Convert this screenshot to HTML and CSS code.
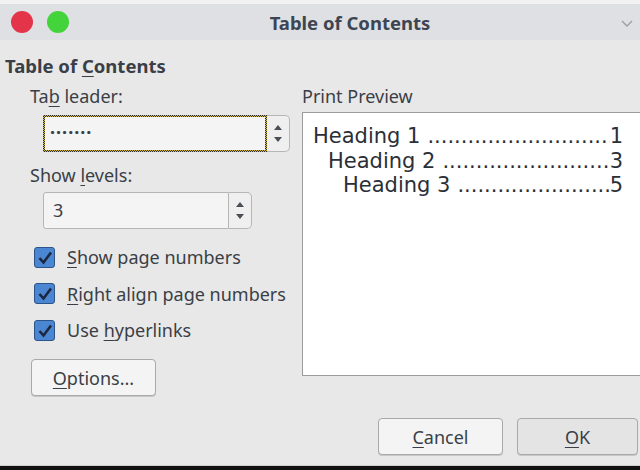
FILE: index.html
```html
<!DOCTYPE html>
<html>
<head>
<meta charset="utf-8">
<link rel="stylesheet" href="styles.css">
</head>
<body>
<div class="window">
  <div class="topstrip"></div>
  <header class="titlebar">
    <div class="lights">
      <span class="light red"></span>
      <span class="light green"></span>
    </div>
    <div class="title">Table of Contents</div>
    <svg class="chev" width="14" height="10" viewBox="0 0 14 10"><path d="M2 3 L7 8 L12 3" fill="none" stroke="#9aa0a8" stroke-width="1.4"/></svg>
  </header>

  <main class="content">
    <h1 class="heading">Table of <u>C</u>ontents</h1>
    <div class="cols">
      <section class="left">
        <div class="label first">Ta<u>b</u> leader:</div>
        <div class="spin wide">
          <div class="field focus">·······</div>
          <div class="arrows"><span class="up"></span><span class="down"></span></div>
        </div>
        <div class="label second">Show <u>l</u>evels:</div>
        <div class="spin narrow">
          <div class="field">3</div>
          <div class="arrows"><span class="up"></span><span class="down"></span></div>
        </div>
        <div class="checks">
          <label class="check"><span class="box"><svg viewBox="0 0 20 20" width="20" height="20"><path d="M4.5 10 L8.5 14.5 L16 4.5" fill="none" stroke="#1d2740" stroke-width="2.6"/></svg></span><span><u>S</u>how page numbers</span></label>
          <label class="check"><span class="box"><svg viewBox="0 0 20 20" width="20" height="20"><path d="M4.5 10 L8.5 14.5 L16 4.5" fill="none" stroke="#1d2740" stroke-width="2.6"/></svg></span><span><u>R</u>ight align page numbers</span></label>
          <label class="check"><span class="box"><svg viewBox="0 0 20 20" width="20" height="20"><path d="M4.5 10 L8.5 14.5 L16 4.5" fill="none" stroke="#1d2740" stroke-width="2.6"/></svg></span><span>Use <u>h</u>yperlinks</span></label>
        </div>
        <button class="btn options"><u>O</u>ptions...</button>
      </section>
      <section class="right">
        <div class="label first plain">Print Preview</div>
        <div class="preview">
          <div class="toc"><span class="name">Heading 1</span><span class="dots"></span><span>1</span></div>
          <div class="toc l2"><span class="name">Heading 2</span><span class="dots"></span><span>3</span></div>
          <div class="toc l3"><span class="name">Heading 3</span><span class="dots"></span><span>5</span></div>
        </div>
      </section>
    </div>
  </main>

  <footer class="footer">
    <button class="btn"><u>C</u>ancel</button>
    <button class="btn ok"><u>O</u>K</button>
  </footer>
  <div class="bottombar"></div>
</div>
</body>
</html>
```
FILE: styles.css
```css
* { box-sizing: border-box; }
html, body { margin: 0; padding: 0; }
body {
  width: 640px;
  height: 470px;
  overflow: hidden;
  background: #e8e8e8;
  font-family: "Noto Sans", "Open Sans", sans-serif;
  color: #3a3f47;
}
u { text-decoration-thickness: 1px; text-underline-offset: 3px; }

.window { display: flex; flex-direction: column; height: 470px; }

.topstrip { height: 4px; background: #f2f2f2; }

.titlebar {
  height: 36px;
  background: #dfe0e3;
  display: flex;
  align-items: center;
  position: relative;
  padding: 0 0 0 11px;
}
.lights { display: flex; gap: 14px; }
.light { width: 22px; height: 22px; border-radius: 50%; display: block; }
.red { background: #e3344a; }
.green { background: #43d33a; }
.title {
  position: absolute;
  left: 0; right: 0; top: 0; bottom: 0;
  display: flex; align-items: center; justify-content: center;
  padding-left: 60px;
  font-weight: 700;
  font-size: 18.5px;
  color: #3d4552;
}
.chev { position: absolute; right: 6px; top: 14px; }

.content { flex: 1; padding: 14px 0 0 5px; min-height: 0; }
.heading {
  margin: 0;
  font-size: 18.5px;
  font-weight: 700;
  color: #3a3f47;
  line-height: 24px;
}

.cols { display: flex; }
.left { width: 297px; flex-shrink: 0; padding-left: 25px; }
.right { flex: 1; min-width: 0; }

.label { font-size: 18px; line-height: 24px; }
.label.first { margin-top: 6px; }
.label.second { margin-top: 11px; }
.label.plain { margin-bottom: 4px; }

.spin { display: flex; margin-left: 13px; height: 37px; }
.spin.wide { width: 247px; margin-top: 7px; }
.spin.narrow { width: 209px; margin-top: 5px; }
.field {
  flex: 1;
  border: 1px solid #b6b6b6;
  border-radius: 3px 0 0 3px;
  background: #f4f4f4;
  font-size: 18px;
  line-height: 34px;
  padding-left: 9px;
}
.field.focus {
  border: 2px solid transparent;
  border-radius: 0;
  background:
    linear-gradient(#f4f4f4, #f4f4f4) padding-box,
    repeating-conic-gradient(#2a2a2a 0 25%, #d9be3c 0 50%) 0 0 / 2px 2px border-box;
  line-height: 31px;
  padding-left: 5px;
  letter-spacing: 1px;
  font-weight: 700;
}
.arrows {
  width: 23px;
  border: 1px solid #b6b6b6;
  border-left: none;
  border-radius: 0 5px 5px 0;
  background: #efefef;
  display: flex;
  flex-direction: column;
  align-items: center;
  justify-content: center;
  gap: 7px;
}
.up, .down { width: 0; height: 0; border-left: 4px solid transparent; border-right: 4px solid transparent; }
.up { border-bottom: 5px solid #4a4f57; }
.down { border-top: 5px solid #4a4f57; }

.checks { margin: 16px 0 0 4px; display: flex; flex-direction: column; gap: 12.5px; }
.check { display: flex; align-items: center; gap: 12px; font-size: 18px; line-height: 24px; }
.box {
  width: 21px; height: 21px;
  border: 1px solid #2d5488;
  border-radius: 3px;
  background: #4a86d2;
  display: block;
}
.box svg { display: block; }

.btn {
  font-family: "Noto Sans", "Open Sans", sans-serif;
  font-size: 18px;
  color: #3a3f47;
  background: #f4f4f4;
  border: 1px solid #a9a9a9;
  border-radius: 4px;
  height: 37px;
  width: 125px;
  padding: 0;
  box-shadow: 0 1px 0 #c8c8c8;
}
.options { margin: 17px 0 0 1px; display: block; }

.preview {
  height: 264px;
  background: #ffffff;
  border: 1px solid #9c9c9c;
  border-right: none;
  padding: 11px 0 0 10px;
}
.toc {
  display: flex;
  font-family: "DejaVu Sans", sans-serif;
  font-size: 21px;
  line-height: 24.5px;
  color: #2b2f36;
  width: 310px;
  white-space: nowrap;
}
.toc .name { margin-right: 7px; }
.toc .dots { flex: 1; overflow: hidden; }
.toc .dots::before { content: "..................................................."; }
.l2 { padding-left: 15px; }
.l3 { padding-left: 30px; }

.footer {
  display: flex;
  justify-content: flex-end;
  gap: 14px;
  margin: 0 2px 10px 0;
}
.ok { background: #e4e4e4; width: 121px; }

.bottombar { height: 5px; background: #111; border-top: 1px solid #cfcfcf; }
```
